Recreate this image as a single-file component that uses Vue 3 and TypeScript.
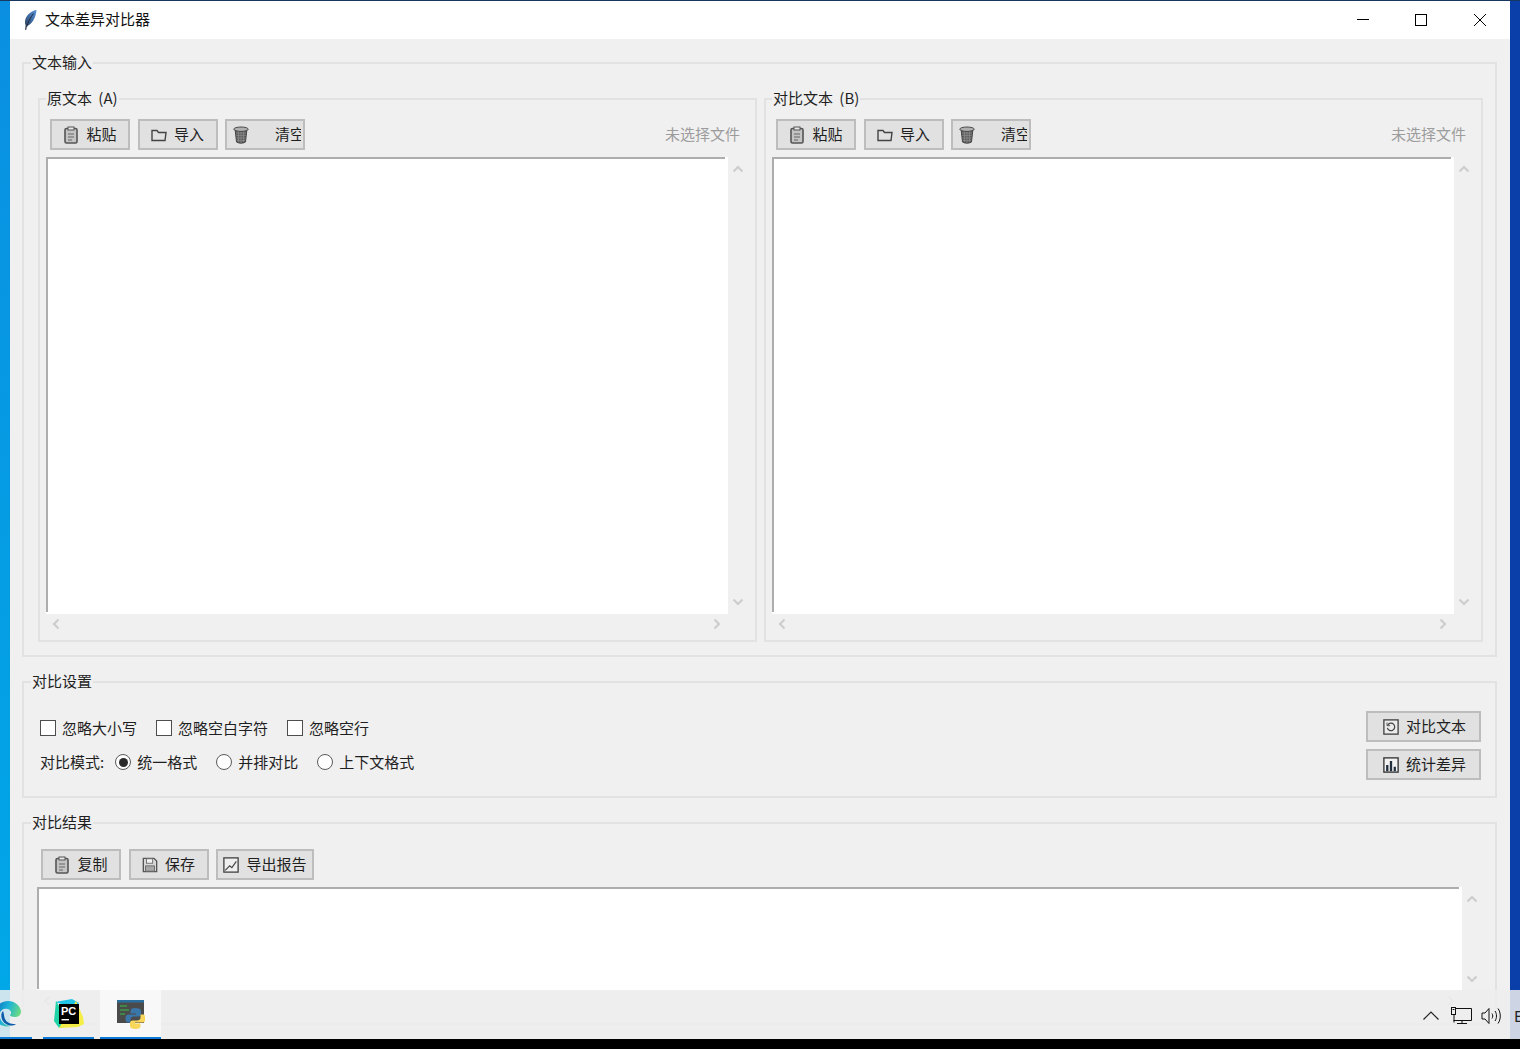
<script setup lang="ts">
interface Tool { icon: string; label: string; clip?: boolean }
const paneTools: Tool[] = [
  { icon: 'clip', label: '粘贴' },
  { icon: 'folder', label: '导入' },
  { icon: 'trash', label: '清空', clip: true },
]
const panes = [
  { title: '原文本 (A)', status: '未选择文件' },
  { title: '对比文本 (B)', status: '未选择文件' },
]
const checks = ['忽略大小写', '忽略空白字符', '忽略空行']
const modes = ['统一格式', '并排对比', '上下文格式']
const actions = [
  { icon: 'compare', label: '对比文本' },
  { icon: 'bars', label: '统计差异' },
]
const resultTools: Tool[] = [
  { icon: 'clip', label: '复制' },
  { icon: 'disk', label: '保存' },
  { icon: 'report', label: '导出报告' },
]
</script>

<template>
  <div class="desktop">
    <svg class="defs" aria-hidden="true">
      <symbol id="i-clip" viewBox="0 0 16 18">
        <rect x="2" y="2.500" width="12" height="14.500" rx="1.500" fill="#c4c4c4" stroke="#555" stroke-width="1.600" />
        <rect x="5" y="1" width="6" height="3" fill="#e8e8e8" stroke="#555" />
        <path d="M5 8h6M5 11h6M5 14h4" stroke="#666" stroke-width="1" />
      </symbol>
      <symbol id="i-folder" viewBox="0 0 16 14">
        <path d="M1 12.500V2.500h5l1.500 2H15l-1 8z" fill="none" stroke="#444" stroke-width="1.400" />
      </symbol>
      <symbol id="i-trash" viewBox="0 0 16 18">
        <path d="M2.200 4l1.300 12c2.500 1.600 6.500 1.600 9 0L13.800 4z" fill="#5f5f5f" stroke="#444" />
        <path d="M3 7h10M3.300 9.500h9.400M3.500 12h9M3.800 14.500h8.400M5.500 5v11M8 5v12M10.500 5v11" stroke="#8d8d8d" stroke-width=".7" />
        <ellipse cx="8" cy="3.200" rx="7.200" ry="2.200" fill="#b0b0b0" stroke="#4a4a4a" />
      </symbol>
      <symbol id="i-disk" viewBox="0 0 18 18">
        <path d="M1.500 1.500h12l3 3v12h-15z" fill="#d8d8d8" stroke="#555" stroke-width="1.500" />
        <rect x="5" y="2" width="7" height="5" fill="#f4f4f4" stroke="#666" />
        <rect x="4" y="10" width="10" height="6" fill="#a8a8a8" stroke="#666" />
      </symbol>
      <symbol id="i-report" viewBox="0 0 18 18">
        <rect x="1" y="1" width="16" height="16" fill="#efefef" stroke="#444" stroke-width="1.500" />
        <path d="M2.500 15l5-5 2.500 2 5-7" fill="none" stroke="#444" stroke-width="1.300" />
      </symbol>
      <symbol id="i-compare" viewBox="0 0 18 18">
        <rect x="1" y="1" width="16" height="16" fill="#ececec" stroke="#444" stroke-width="1.500" />
        <path d="M5.500 6.500a4.200 4.200 0 1 1-.6 3.500" fill="none" stroke="#444" stroke-width="1.400" />
        <path d="M4.500 4v3.500H8" fill="none" stroke="#444" stroke-width="1" />
      </symbol>
      <symbol id="i-bars" viewBox="0 0 18 18">
        <rect x="1" y="1" width="16" height="16" fill="#f2f2f2" stroke="#333" stroke-width="1.500" />
        <path d="M3.500 16V9h2.600v7zM7.700 16V4.500h2.600V16zM12 16v-5h2.500v5z" fill="#22303e" />
      </symbol>
      <symbol id="i-up" viewBox="0 0 12 8">
        <path d="M1.500 6.500L6 2l4.500 4.500" fill="none" stroke="#cdcdcd" stroke-width="2.200" />
      </symbol>
      <symbol id="i-down" viewBox="0 0 12 8">
        <path d="M1.500 1.500L6 6l4.500-4.500" fill="none" stroke="#cdcdcd" stroke-width="2.200" />
      </symbol>
      <symbol id="i-left" viewBox="0 0 8 12">
        <path d="M6.500 1.500L2 6l4.500 4.500" fill="none" stroke="#cdcdcd" stroke-width="2.200" />
      </symbol>
      <symbol id="i-right" viewBox="0 0 8 12">
        <path d="M1.500 1.500L6 6l-4.500 4.500" fill="none" stroke="#cdcdcd" stroke-width="2.200" />
      </symbol>
    </svg>

    <div class="window">
      <header class="titlebar">
        <svg class="feather" viewBox="0 0 13 20">
          <defs>
            <linearGradient id="fe" x1="1" y1="0" x2="0" y2="1">
              <stop offset="0" stop-color="#5a95dc" />
              <stop offset=".6" stop-color="#3a5f92" />
              <stop offset="1" stop-color="#3a3f4a" />
            </linearGradient>
          </defs>
          <path d="M12.500 0C8 .5 2.500 4.500 1.200 10c-.5 2.200-.2 4 .4 5.500L1 19.800l1.200.2.9-4.300C7.500 15 12 8 12.500 0z" fill="url(#fe)" />
          <path d="M9.500 3.500C6.500 7.500 4 12 2.600 17" fill="none" stroke="#14202f" stroke-width=".9" />
        </svg>
        <span class="title">文本差异对比器</span>
        <div class="controls">
          <button class="ctl" type="button" aria-label="最小化">
            <svg width="12" height="12" viewBox="0 0 12 12"><path d="M0 5.500h12" stroke="#000" /></svg>
          </button>
          <button class="ctl" type="button" aria-label="最大化">
            <svg width="12" height="12" viewBox="0 0 12 12"><rect x=".5" y=".5" width="11" height="11" fill="none" stroke="#000" /></svg>
          </button>
          <button class="ctl" type="button" aria-label="关闭">
            <svg width="12" height="12" viewBox="0 0 12 12"><path d="M0 0l12 12M12 0L0 12" stroke="#000" /></svg>
          </button>
        </div>
      </header>

      <main class="client">
        <fieldset class="group input-group">
          <legend>文本输入</legend>
          <div class="panes">
            <fieldset v-for="p in panes" :key="p.title" class="group pane">
              <legend>{{ p.title }}</legend>
              <div class="toolbar">
                <button v-for="t in paneTools" :key="t.label" class="btn" :class="{ clipped: t.clip }" type="button">
                  <svg class="ico"><use :href="`#i-${t.icon}`" /></svg>
                  <span class="btn-text">{{ t.label }}</span>
                </button>
                <span class="status">{{ p.status }}</span>
              </div>
              <div class="editor">
                <div class="text-box"></div>
                <div class="vscroll">
                  <svg class="ch-v"><use href="#i-up" /></svg>
                  <svg class="ch-v"><use href="#i-down" /></svg>
                </div>
              </div>
              <div class="hscroll">
                <svg class="ch-h"><use href="#i-left" /></svg>
                <svg class="ch-h"><use href="#i-right" /></svg>
              </div>
            </fieldset>
          </div>
        </fieldset>

        <fieldset class="group settings">
          <legend>对比设置</legend>
          <div class="settings-body">
            <div class="options">
              <div class="opt-row checks">
                <label v-for="c in checks" :key="c" class="opt">
                  <span class="checkbox"></span>{{ c }}
                </label>
              </div>
              <div class="opt-row modes">
                <span class="mode-label">对比模式:</span>
                <label v-for="(m, i) in modes" :key="m" class="opt">
                  <span class="radio" :class="{ on: i === 0 }"></span>{{ m }}
                </label>
              </div>
            </div>
            <div class="actions">
              <button v-for="a in actions" :key="a.label" class="btn action" type="button">
                <svg class="ico"><use :href="`#i-${a.icon}`" /></svg>
                <span class="btn-text">{{ a.label }}</span>
              </button>
            </div>
          </div>
        </fieldset>

        <fieldset class="group results">
          <legend>对比结果</legend>
          <div class="toolbar">
            <button v-for="t in resultTools" :key="t.label" class="btn" :class="{ wide: t.icon === 'report' }" type="button">
              <svg class="ico"><use :href="`#i-${t.icon}`" /></svg>
              <span class="btn-text">{{ t.label }}</span>
            </button>
          </div>
          <div class="editor result-editor">
            <div class="text-box"></div>
            <div class="vscroll">
              <svg class="ch-v"><use href="#i-up" /></svg>
              <svg class="ch-v"><use href="#i-down" /></svg>
            </div>
          </div>
          <div class="hscroll">
            <svg class="ch-h"><use href="#i-left" /></svg>
            <svg class="ch-h"><use href="#i-right" /></svg>
          </div>
        </fieldset>
      </main>
    </div>

    <footer class="taskbar">
      <div class="task edge">
        <svg class="edge-ico" viewBox="0 0 26 26">
          <defs>
            <linearGradient id="eg" x1="0" y1="0" x2="1" y2=".4">
              <stop offset="0" stop-color="#0a6cbc" />
              <stop offset=".5" stop-color="#1bb2d8" />
              <stop offset="1" stop-color="#6fdc80" />
            </linearGradient>
          </defs>
          <path d="M0 13C0 5 6 0 13 0c8 0 13 6 13 11 0 3-3 5-6 5-3 0-5-1-5-2 1-1 1-2 1-3-1-3-4-4-7-3-4 1-5 5-4 9 1 4 6 8 11 8C5 27 0 21 0 13z" fill="url(#eg)" />
          <path d="M8 10c-3 3-2 10 3 13 4 2 7 2 10 0-3 .5-9-.5-11-5-1-2-1-6-2-8z" fill="#0b5cab" />
        </svg>
      </div>
      <div class="task pc">
        <svg width="30" height="30" viewBox="0 0 30 30">
          <path d="M1 3l17-3 7 4-4 5z" fill="#1fc4e8" />
          <path d="M2 2L0 22l5 7 12-2z" fill="#1ed3a5" />
          <path d="M22 2l7 16 1 7-6 3-19 1z" fill="#f4ee46" />
          <rect x="5" y="5" width="20" height="20" fill="#000" />
          <text x="7" y="16" class="pc-text">PC</text>
          <rect x="7.500" y="20" width="7.500" height="1.400" fill="#fff" />
        </svg>
      </div>
      <div class="task py">
        <svg width="28" height="29" viewBox="0 0 28 29">
          <rect x="0" y="0" width="27" height="23" fill="#4b4b4b" />
          <rect x="0" y="0" width="27" height="2.500" fill="#2a6f9e" />
          <path d="M3 6h7M3 10h9M3 14h5" stroke="#3f9a4a" stroke-width="1.300" />
          <path d="M18.500 8c-3.500 0-5 1-5 3v2.500H19v1h-7.500c-2 0-3 1.500-3 4s1 4 2.700 4h2.300v-3c0-2 1.500-3 3.500-3h4.500c1.500 0 2.500-1 2.500-2.500v-3c0-1.800-2-3-5.500-3z" fill="#3a76a8" />
          <path d="M18.500 8c-3.500 0-5 1-5 3v2.500H19v1h-7.500c-2 0-3 1.500-3 4s1 4 2.700 4h2.300v-3c0-2 1.500-3 3.500-3h4.500c1.500 0 2.500-1 2.500-2.500v-3c0-1.800-2-3-5.500-3z" fill="#f7d65a" transform="rotate(180 18.5 18.5)" />
        </svg>
      </div>
      <div class="tray">
        <svg class="tray-up" width="16" height="9" viewBox="0 0 16 9"><path d="M.5 8.500L8 1l7.500 7.500" fill="none" stroke="#222" stroke-width="1.200" /></svg>
        <svg class="tray-net" width="21" height="18" viewBox="0 0 21 18">
          <path d="M3.500 1.500H20.500V13.500H2.500M3 8v7.500M11 13.500v3M6 16.500h10" fill="none" stroke="#111" />
          <rect x=".5" y=".5" width="4" height="7" fill="#eee" stroke="#111" />
          <path d="M1.500 2.500h2" stroke="#111" />
        </svg>
        <svg class="tray-vol" width="20" height="18" viewBox="0 0 20 18">
          <path d="M1 6h3l4-4.500v15L4 12H1z" fill="none" stroke="#111" />
          <path d="M11 6.500c1 1.500 1 3.500 0 5M14 4c2 3 2 7 0 10M17 1.500c3 4 3 11 0 15" fill="none" stroke="#111" />
        </svg>
        <span class="tray-lang">E</span>
      </div>
    </footer>
    <div class="black"></div>
  </div>
</template>

<style scoped>
.desktop {
  position: relative;
  display: flex;
  flex-direction: column;
  width: 1520px;
  height: 1049px;
  overflow: hidden;
  background:
    linear-gradient(#17375e, #17375e) top / 100% 1px no-repeat,
    linear-gradient(#0a8fe0, #00a9e8) left / 10px 100% no-repeat,
    #0a3ea8;
  font-family: "Noto Sans CJK SC", "Liberation Sans", sans-serif;
  font-size: 15px;
  color: #1f1f1f;
}
.defs { display: none; }
.window {
  flex: 1;
  min-height: 0;
  margin: 1px 10px 0;
  overflow: hidden;
  background: #f0f0f0;
}
.titlebar {
  display: flex;
  align-items: center;
  height: 38px;
  background: #fff;
}
.feather { width: 13px; height: 20px; margin-left: 14px; }
.title { margin-left: 8px; padding-bottom: 2px; color: #111; line-height: 20px; }
.controls { display: flex; margin-left: auto; margin-right: 1px; }
.ctl {
  display: flex;
  align-items: center;
  justify-content: center;
  width: 58.500px;
  height: 38px;
  padding: 0;
  border: 0;
  background: transparent;
}
.client { padding: 13px 13px 0 12px; }

.group {
  min-width: 0;
  margin: 0;
  padding: 0;
  border: 2px solid #e2e2e2;
}
.group > legend {
  padding: 0 1px 2px;
  line-height: 20px;
  word-spacing: 3px;
  color: #1f1f1f;
}
.input-group { padding: 14px 12px 13px 14px; }
.input-group > legend { margin-left: -7px; }
.panes {
  display: grid;
  grid-template-columns: 1fr 1fr;
  column-gap: 7px;
}
.pane { padding: 0 7px 6px 6px; }
.pane > legend { margin-left: 0; }
.toolbar {
  display: flex;
  align-items: center;
  gap: 7.500px;
  padding: 9px 0 0 4px;
}
.btn {
  display: flex;
  align-items: center;
  justify-content: center;
  gap: 7px;
  box-sizing: border-box;
  width: 80px;
  height: 31px;
  padding: 0;
  border: 2px solid #bdbdbd;
  background: #e1e1e1;
  font: inherit;
  color: #1f1f1f;
}
.btn-text { padding-bottom: 2px; line-height: 20px; white-space: nowrap; }
.ico { width: 16px; height: 18px; flex: none; }
.clipped { justify-content: flex-start; padding-left: 6px; gap: 0; }
.clipped .btn-text {
  width: 26px;
  margin-left: 26px;
  overflow: hidden;
}
.wide { width: 98px; }
.status {
  margin-left: auto;
  padding: 0 8px 2px 0;
  color: #9c9c9c;
  line-height: 20px;
}
.editor {
  display: flex;
  height: 457px;
  margin-top: 7px;
}
.text-box {
  flex: 1;
  min-width: 0;
  background:
    linear-gradient(#adadad, #adadad) top left / calc(100% - 3px) 2px no-repeat,
    linear-gradient(#adadad, #adadad) top left / 2px calc(100% - 2px) no-repeat,
    #fff;
}
.vscroll {
  display: flex;
  flex-direction: column;
  align-items: center;
  justify-content: space-between;
  box-sizing: border-box;
  width: 20px;
  padding: 8px 0;
}
.ch-v { width: 12px; height: 8px; }
.ch-h { width: 8px; height: 12px; }
.hscroll {
  display: flex;
  align-items: center;
  justify-content: space-between;
  box-sizing: border-box;
  height: 20px;
  margin-right: 20px;
  padding: 0 7px 0 6px;
}

.settings { margin-top: 14px; }
.settings > legend { margin-left: 7px; }
.settings-body {
  display: flex;
  justify-content: space-between;
  padding: 18px 14px 16px 16px;
}
.options {
  display: flex;
  flex-direction: column;
  gap: 14px;
  padding-top: 7px;
}
.opt-row { display: flex; align-items: center; height: 20px; }
.checks { gap: 19px; }
.modes { gap: 19px; }
.mode-label { margin-right: -8px; padding-bottom: 1px; }
.opt { display: flex; align-items: center; gap: 6px; line-height: 20px; white-space: nowrap; }
.checkbox {
  box-sizing: border-box;
  width: 16px;
  height: 16px;
  background: #fff;
  border: 1.500px solid #4d4d4d;
}
.radio {
  position: relative;
  box-sizing: border-box;
  width: 16px;
  height: 16px;
  border: 1.500px solid #5a5a5a;
  border-radius: 50%;
  background: #fff;
}
.radio.on::after {
  content: "";
  position: absolute;
  inset: 2.500px;
  border-radius: 50%;
  background: #2b2b2b;
}
.actions { display: flex; flex-direction: column; gap: 7px; }
.action { width: 115px; padding-left: 2px; }

.results { margin-top: 14px; padding: 0 13px 12px; }
.results > legend { margin-left: -6px; }
.results > .toolbar { padding-top: 15px; }
.result-editor { height: 104px; }

.taskbar {
  position: absolute;
  left: 0;
  right: 0;
  bottom: 10px;
  display: flex;
  height: 49px;
  background: rgba(238, 238, 238, 0.86);
}
.task {
  display: flex;
  align-items: center;
  justify-content: center;
  box-sizing: border-box;
  padding-top: 1px;
  border-bottom: 2px solid #0a78d4;
}
.edge { width: 32px; overflow: hidden; justify-content: flex-start; }
.edge-ico { flex: none; width: 26px; height: 26px; margin-left: -5px; }
.pc { width: 51px; margin-left: 11px; }
.py { width: 61px; margin-left: 6px; background: #f8f8f8; }
.pc-text { font: 700 11px "Liberation Sans", sans-serif; fill: #fff; }
.tray {
  display: flex;
  align-items: center;
  margin-left: auto;
  padding-top: 2px;
}
.tray-net { margin-left: 12px; }
.tray-vol { margin-left: 9px; }
.tray-lang {
  width: 6px;
  margin-left: 13px;
  overflow: hidden;
  color: #222;
  line-height: 20px;
}
.black { flex: none; height: 10px; background: #000; position: relative; z-index: 1; }
</style>
